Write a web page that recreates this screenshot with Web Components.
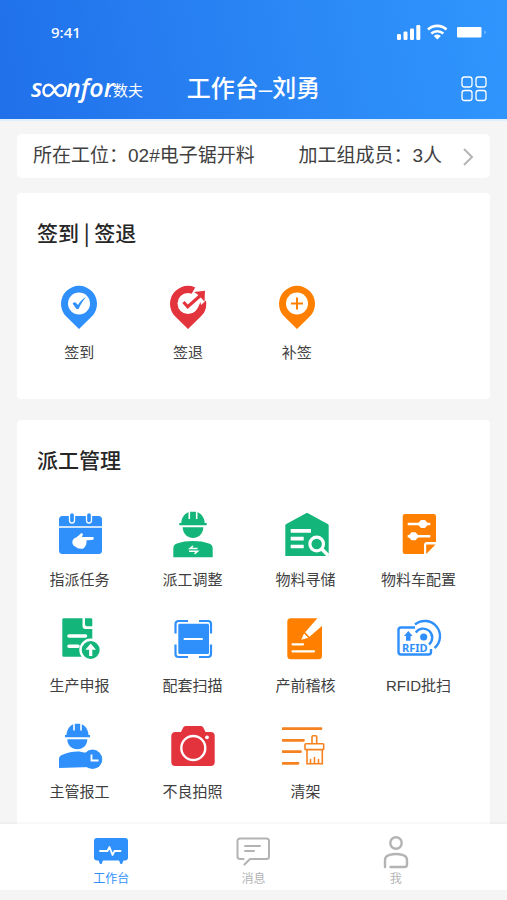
<!DOCTYPE html>
<html lang="zh-CN">
<head>
<meta charset="utf-8">
<meta name="viewport" content="width=device-width, initial-scale=1">
<title>工作台</title>
<style>
  body {
    margin: 0;
    font-family: "Liberation Sans", "Noto Sans CJK SC", sans-serif;
    color: #3d3d3d;
    background: #f5f5f5;
    --blue: #2f90fb;
    --green: #14b57b;
    --orange: #ff8000;
    --red: #e3343e;
  }
</style>
</head>
<body>
<app-shell>
  <app-header slot="header">工作台–刘勇</app-header>

  <station-bar>
    <span slot="station">所在工位：02#电子锯开料</span>
    <span slot="members">加工组成员：3人</span>
  </station-bar>

  <app-section narrow>
    <span slot="title">签到 | 签退</span>
    <app-tile style="color:var(--blue)">
      <svg slot="icon" viewBox="0 0 48 48"><path fill="currentColor" d="M24 46 11 33.3A18 18 0 1 1 37 33.3Z"/><circle cx="24" cy="20.500" r="11" fill="#fff"/><path fill="currentColor" d="m17.500 20.500 2.500-1.500 3 3c2-3.500 4.500-6 8-8-3 3.500-5.500 7.500-7.500 12h-2Z"/></svg>签到</app-tile>
    <app-tile style="color:var(--red)">
      <svg slot="icon" viewBox="0 0 48 48"><path fill="currentColor" d="M24 46 11 33.3A18 18 0 1 1 37 33.3Z"/><circle cx="24" cy="20.500" r="10.500" fill="#fff"/><path fill="#fff" d="M27 12 32 3l13-1 1 14-6 4-7 7-5 3Z"/><path d="M34 24.500 36.500 19l.5 3 5-4.500A18 18 0 0 1 39 31l-8-2Z" fill="currentColor"/><path d="m19.500 19 4.200 4.800L37 12" fill="none" stroke="currentColor" stroke-width="3.200"/><path fill="currentColor" d="m30 9 11-1.200-.5 11-3.500-4-3-3Z"/></svg>签退</app-tile>
    <app-tile style="color:var(--orange)">
      <svg slot="icon" viewBox="0 0 48 48"><path fill="currentColor" d="M24 46 11 33.3A18 18 0 1 1 37 33.3Z"/><circle cx="24" cy="20.500" r="11" fill="#fff"/><path d="M18 20.500h12M24 14.500v12" stroke="currentColor" stroke-width="2"/></svg>补签</app-tile>
  </app-section>

  <app-section>
    <span slot="title">派工管理</span>
    <app-tile style="color:var(--blue)">
      <svg slot="icon" viewBox="0 0 48 48"><rect x="3" y="6" width="43" height="38" rx="3.500" fill="currentColor"/><path d="M3 17h43" stroke="#fff" stroke-width="1.500"/><g fill="currentColor" stroke="#fff" stroke-width="1.300"><rect x="13.500" y="2.500" width="5" height="10.500" rx="2.500"/><rect x="30.500" y="2.500" width="5" height="10.500" rx="2.500"/></g><path fill="#fff" d="M37 27c1 .300 1 2.300 0 2.700l-7 .800c1 .600.800 1.800.200 2.300.500.900.200 1.900-.600 2.300.200 1-.300 1.900-1.200 2.100-.400 1.300-1.400 1.500-3.400 1.500-2.600 0-4.300-.700-5.400-2-3.900-1-4.200-6.300-1.300-8.400 2.700-1.200 4.700-2.800 6.200-4.600 1-1.100 3-.200 2.300 1.400L25.800 27Z"/></svg>指派任务</app-tile>
    <app-tile style="color:var(--green)">
      <svg slot="icon" viewBox="0 0 48 48"><g fill="currentColor"><path d="M10.300 15.300v-2.400h2C12.500 7.500 16 3 21 1.800h6C32 3 35.500 7.500 35.700 12.900h2v2.400Z"/><path d="M13.700 17.300H34.300c0 6.200-4.500 10.600-10.300 10.600S13.700 23.500 13.700 17.300Z"/><path d="M4.300 47.300V39c0-3 1-4.500 3.700-5.500 9-3.300 23-3.300 32 0 2.700 1 3.700 2.500 3.700 5.500v8.300Z"/></g><path d="M20.300 1v8M27.700 1v8" stroke="#fff" stroke-width="1.600"/><path d="M28.500 38.500H21l3-2.500M20 41.300h8.500l-3 2.500" fill="none" stroke="#fff" stroke-width="1.500"/></svg>派工调整</app-tile>
    <app-tile style="color:var(--green)">
      <svg slot="icon" viewBox="0 0 48 48"><path fill="currentColor" d="M3.300 46V15.500c0-.8.300-1.200 1-1.600L25 2.700l20.700 11.200c.7.400 1 .8 1 1.600V46Z"/><path d="M8.700 20.800H29M8.700 28.600h13M8.700 36.500h13" stroke="#fff" stroke-width="3.700"/><circle cx="34.700" cy="34" r="6.800" fill="none" stroke="#fff" stroke-width="3.200"/><path d="m39.500 38.800 7 7" stroke="#fff" stroke-width="3.600"/></svg>物料寻储</app-tile>
    <app-tile style="color:var(--orange)">
      <svg slot="icon" viewBox="0 0 48 48"><path fill="currentColor" d="M10 4h28.700A2.300 2.300 0 0 1 41 6.300V32H32a3 3 0 0 0-3 3v9H10a2.300 2.300 0 0 1-2.300-2.300V6.300A2.300 2.300 0 0 1 10 4ZM31.200 34.500h9.300L31.200 44Z"/><path d="M12.700 14h22.600M12.700 26.300h22.600" stroke="#fff" stroke-width="2.600"/><path fill="#fff" d="m22.500 14 3.500-4h4l3.500 4-3.500 4h-4ZM13 26.300l3.500-4h4l3.500 4-3.500 4h-4Z"/></svg>物料车配置</app-tile>

    <app-tile style="color:var(--green)">
      <svg slot="icon" viewBox="0 0 48 48"><path fill="currentColor" d="M7.500 2.300H26.500V10a3 3 0 0 0 3 3h6.800v27.700H7.500a1.200 1.200 0 0 1-1.200-1.200v-36a1.200 1.200 0 0 1 1.200-1.200ZM29 2.300h6.100a1.200 1.200 0 0 1 1.200 1.200v6.800H31a2 2 0 0 1-2-2Z"/><path d="M13 20h16.500M13 30.200h9" stroke="#fff" stroke-width="3.600" stroke-linecap="round"/><circle cx="34.700" cy="34" r="10.200" fill="currentColor" stroke="#fff" stroke-width="2.400"/><path fill="#fff" d="m34.700 27.500 5.300 6.200h-3.700v6.300h-3.200v-6.300h-3.700Z"/></svg>生产申报</app-tile>
    <app-tile style="color:var(--blue)">
      <svg slot="icon" viewBox="0 0 48 48"><rect x="9.300" y="7.700" width="30.700" height="30.300" rx="1.500" fill="currentColor"/><path d="M15.500 23h17.500" stroke="#fff" stroke-width="2" stroke-linecap="round"/><path d="M6.500 17.500V8a3 3 0 0 1 3-3H19M30 5h9a3 3 0 0 1 3 3v9.500M42 28.500V38a3 3 0 0 1-3 3h-9M19 41H9.500a3 3 0 0 1-3-3v-9.500" fill="none" stroke="currentColor" stroke-width="2.200"/></svg>配套扫描</app-tile>
    <app-tile style="color:var(--orange)">
      <svg slot="icon" viewBox="0 0 48 48"><rect x="5.300" y="2.300" width="34.700" height="41" rx="3.500" fill="currentColor"/><path fill="#fff" d="M36 1.500h5V9L27.500 20.800l-4.300-4.500ZM22 17.500l4.300 4.300-7 2Z"/><path d="M10.500 28.300h10.500M10.500 35.300H32" stroke="#fff" stroke-width="2.200" stroke-linecap="round"/></svg>产前稽核</app-tile>
    <app-tile style="color:var(--blue)">
      <svg slot="icon" viewBox="0 0 48 48"><g fill="none" stroke="currentColor" stroke-width="2.400"><path d="M20 11.500H6a2.500 2.500 0 0 0-2.500 2.500v22A2.500 2.500 0 0 0 6 38.500h27.500A2.500 2.500 0 0 0 36 36v-3"/><path d="M20 8.500A14.800 14.800 0 1 1 39.500 32"/><path d="M20.800 16.500A9 9 0 1 1 34 28.500"/></g><circle cx="28.700" cy="21" r="3.600" fill="currentColor"/><path fill="currentColor" d="m13.300 15 4.300 5h-2v4.800h-4.600V20H9Z"/><text x="7" y="35.500" font-family="Noto Sans, sans-serif" font-size="11" font-weight="700" fill="currentColor">RFID</text></svg>RFID批扫</app-tile>

    <app-tile style="color:var(--blue)">
      <svg slot="icon" viewBox="0 0 48 48"><g fill="currentColor"><path d="M9 15.300v-2.200h1.500C10.700 7.500 14 3.300 18.500 1.800h6C29 3.300 32.300 7.500 32.500 13.100H34v2.200Z"/><path d="M11.300 17.300H31.300c0 5.800-4.200 10-10 10s-10-4.200-10-10Z"/><path d="M3 46v-9c0-2 1-3.500 3.500-4.300 9-3.400 16-4.400 24-1.600L35 34v11Z"/></g><path d="M18 1v7.500M25 1v7.500" stroke="#fff" stroke-width="1.600"/><circle cx="36.500" cy="37.300" r="9.700" fill="currentColor"/><path d="M35.500 32.500v6h7" fill="none" stroke="#fff" stroke-width="1.800"/></svg>主管报工</app-tile>
    <app-tile style="color:var(--red)">
      <svg slot="icon" viewBox="0 0 48 48"><path fill="currentColor" d="M6.500 10H12l2.200-4.500A2.500 2.500 0 0 1 16.500 4h15.500a2.500 2.500 0 0 1 2.300 1.500L36.500 10h5.200a4 4 0 0 1 4 4v26a4 4 0 0 1-4 4H6.300a4 4 0 0 1-4-4V14a4 4 0 0 1 4.200-4Z"/><circle cx="24.300" cy="26" r="12" fill="none" stroke="#fff" stroke-width="2.400"/><circle cx="38" cy="15.300" r="1.900" fill="#fff"/></svg>不良拍照</app-tile>
    <app-tile style="color:#f5821f">
      <svg slot="icon" viewBox="3 0 48 48"><g fill="none" stroke="currentColor" stroke-linecap="round"><path d="M4 6.700h38M4 18.300h20.500M4 29.700h17.500M4 41.300h15" stroke-width="2.800"/><g stroke-width="1.600"><path d="M33 21.500v-6.700a1 1 0 0 1 1-1h2.700a1 1 0 0 1 1 1v6.700"/><rect x="26" y="21.800" width="18.700" height="5.800" rx=".8"/><path d="M28 27.600v14.200h15.300V27.600M31.500 41v-3.500M35.500 41v-5.500M39.500 41v-3.500"/></g></g></svg>清架</app-tile>
  </app-section>

  <tab-bar slot="footer">
    <tab-item active>
      <svg slot="icon" viewBox="0 0 36 34"><path fill="currentColor" d="M4 3h28a3 3 0 0 1 3 3v16.500a3 3 0 0 1-3 3h-1.500L29 29h-1.500L26 25.500H10L8.500 29H7L5.500 25.500H4a3 3 0 0 1-3-3V6a3 3 0 0 1 3-3Z"/><path d="M7 16h7.500l2-4 3 8 2-4H27.500" fill="none" stroke="#fff" stroke-width="1.800" stroke-linejoin="round" stroke-linecap="round"/></svg>工作台</tab-item>
    <tab-item>
      <svg slot="icon" viewBox="0 0 36 34"><g fill="none" stroke="currentColor" stroke-width="2" stroke-linecap="round" stroke-linejoin="round"><path d="M8.500 24H5a2.500 2.500 0 0 1-2.500-2.500V6A2.500 2.500 0 0 1 5 3.500h26.500A2.500 2.500 0 0 1 34 6v15.500a2.500 2.500 0 0 1-2.500 2.500H15l-5.500 5.500"/><path d="M10 11h15M10 16h9"/></g></svg>消息</tab-item>
    <tab-item>
      <svg slot="icon" viewBox="0 0 36 34"><g fill="none" stroke="currentColor" stroke-width="2.400" stroke-linecap="round"><circle cx="18" cy="8" r="5.700"/><path d="M7 32v-7c0-3.500 2-4.500 4.500-5.200 4-1 9-1 13 0 2.500.700 4.500 1.700 4.500 5.200v4.500A2.500 2.500 0 0 1 26.500 32H12.500"/></g></svg>我</tab-item>
  </tab-bar>
</app-shell>

<script>
  const define = (name, html) => customElements.define(name, class extends HTMLElement {
    constructor() {
      super();
      this.attachShadow({ mode: "open" }).innerHTML = html;
    }
  });

  define("app-shell", `
    <style>
      :host { display: flex; flex-direction: column; height: 100vh; }
      main {
        flex: 1; min-height: 0; overflow-y: auto; scrollbar-width: none;
        display: flex; flex-direction: column; padding: 13px 17px 0;
      }
    </style>
    <slot name="header"></slot>
    <main><slot></slot></main>
    <slot name="footer"></slot>`);

  define("status-bar", `
    <style>
      :host {
        display: flex; align-items: center; justify-content: space-between;
        height: 24px; padding: 0 19px 0 51px;
        font: 500 15px/24px "Noto Sans", sans-serif;
      }
      svg { width: 92px; height: 18px; fill: currentColor; }
    </style>
    <span>9:41</span>
    <svg viewBox="0 0 92 18" aria-hidden="true">
      <rect x="1" y="11" width="4" height="6" rx="1.300"/><rect x="7.500" y="8.500" width="4" height="8.500" rx="1.300"/>
      <rect x="14" y="5.500" width="4" height="11.500" rx="1.300"/><rect x="20.300" y="2" width="4" height="15" rx="1.300"/>
      <g fill="none" stroke="currentColor" stroke-width="2.600"><path d="M32 6.500a13.500 13.500 0 0 1 18.500 0"/><path d="M35.300 10.500a9 9 0 0 1 12 0"/></g>
      <path d="M41.300 16.500 37.800 13a5.500 5.500 0 0 1 7 0Z"/>
      <rect x="61" y="4" width="24.500" height="10.500" rx="1"/><path d="M88.500 7.300q2.500 2 0 4Z" opacity=".5"/>
    </svg>`);

  define("brand-logo", `
    <style>
      :host { display: block; }
      svg { display: block; width: 116px; height: 28px; overflow: visible; }
    </style>
    <svg viewBox="0 0 116 28" role="img" aria-label="soonfor 数夫" fill="#fff">
      <text x="1" y="22" font-family="Open Sans, sans-serif" font-size="25" font-style="italic" font-weight="600">s</text>
      <path d="M25 16c-2-4.800-4-6.300-6.300-6.300-3 0-5.200 2.800-5.200 6.200 0 3 1.900 5 4.500 5 5.500 0 7.500-11.200 13.200-11.200 2.800 0 4.500 2.200 4.500 4.800 0 3.600-2.200 6.400-5.200 6.400-2.600 0-4-1.500-5.500-4.900Z" fill="none" stroke="#fff" stroke-width="2.600"/>
      <text x="36" y="22" font-family="Open Sans, sans-serif" font-size="25" font-style="italic" font-weight="600">nfor</text>
      <circle cx="80" cy="21" r="1"/>
      <text x="83" y="21" font-family="Noto Sans CJK SC, sans-serif" font-size="15">数夫</text>
    </svg>`);

  define("app-header", `
    <style>
      :host {
        display: block; flex: none; color: #fff; padding-top: 20px;
        background: linear-gradient(80deg, #2070ea, #2a86f4 55%, #3096fe);
        border-bottom: 2px solid #e0effd;
      }
      .bar {
        display: grid; grid-template-columns: 1fr auto 1fr; align-items: center;
        height: 36px; padding: 27px 18px 12px;
      }
      brand-logo { margin-left: 12px; }
      h1 { margin: 0; font-size: 24px; font-weight: 500; line-height: 36px; }
      button {
        justify-self: end; display: block; width: 30px; height: 30px; padding: 0;
        border: 0; background: none; color: inherit;
      }
      svg { display: block; width: 30px; height: 30px; }
    </style>
    <status-bar></status-bar>
    <div class="bar">
      <brand-logo></brand-logo>
      <h1><slot></slot></h1>
      <button type="button" aria-label="菜单">
        <svg viewBox="0 0 30 30" fill="none" stroke="currentColor" stroke-width="1.300">
          <rect x="3" y="3" width="10" height="10" rx="2.500"/><rect x="17" y="3" width="10" height="10" rx="2.500"/>
          <rect x="3" y="16.500" width="10" height="10" rx="2.500"/><rect x="17" y="16.500" width="10" height="10" rx="2.500"/>
        </svg>
      </button>
    </div>`);

  define("station-bar", `
    <style>
      :host { display: block; flex: none; margin-bottom: 15px; }
      button {
        display: flex; align-items: center; width: 100%; height: 44px;
        padding: 0 16px; border: 0; border-radius: 5px; background: #fff;
        font: inherit; font-size: 19px; line-height: 28px; color: #404040; text-align: left;
      }
      .station { flex: 1; }
      svg { width: 12px; height: 20px; margin-left: 20px; }
    </style>
    <button type="button">
      <span class="station"><slot name="station"></slot></span>
      <slot name="members"></slot>
      <svg viewBox="0 0 12 20" fill="none" stroke="#b5b5b5" stroke-width="2" aria-hidden="true"><path d="m2 3 8 8-8 8"/></svg>
    </button>`);

  define("app-section", `
    <style>
      :host { display: block; flex: none; margin-bottom: 21px; border-radius: 4px; background: #fff; }
      h2 {
        margin: 0; padding: 24px 20px 36px; color: #262626;
        font-family: "Noto Sans CJK SC", sans-serif;
        font-size: 21px; font-weight: 500; line-height: 30px;
      }
      .grid {
        display: grid; grid-template-columns: repeat(4, 1fr); row-gap: 25px;
        padding: 0 15px 35px 6px;
      }
      :host([narrow]) .grid { padding-left: 8px; padding-right: 30px; }
    </style>
    <h2><slot name="title"></slot></h2>
    <div class="grid"><slot></slot></div>`);

  define("app-tile", `
    <style>
      :host { display: block; }
      button {
        display: flex; flex-direction: column; align-items: center; gap: 11px;
        width: 100%; padding: 0; border: 0; background: none; color: inherit;
        font: inherit; font-size: 15px; line-height: 22px; white-space: nowrap;
      }
      ::slotted(svg) { display: block; width: 48px; height: 48px; }
      span { color: #404040; }
    </style>
    <button type="button"><slot name="icon"></slot><span><slot></slot></span></button>`);

  define("tab-bar", `
    <style>
      :host { display: block; flex: none; border-bottom: 10px solid #f5f5f5; background: #fff; box-shadow: 0 -1px 3px #0000000d; position: relative; }
      nav { display: grid; grid-template-columns: repeat(3, 1fr); padding: 11px 40px 3px; }
    </style>
    <nav><slot></slot></nav>`);

  define("tab-item", `
    <style>
      :host { display: block; color: #b3b3b3; }
      :host([active]) { color: var(--blue); }
      a {
        display: flex; flex-direction: column; align-items: center; gap: 2px;
        color: inherit; text-decoration: none; font-size: 12px; line-height: 16px;
      }
      ::slotted(svg) { display: block; width: 36px; height: 34px; }
    </style>
    <a href="#"><slot name="icon"></slot><span><slot></slot></span></a>`);
</script>
</body>
</html>
